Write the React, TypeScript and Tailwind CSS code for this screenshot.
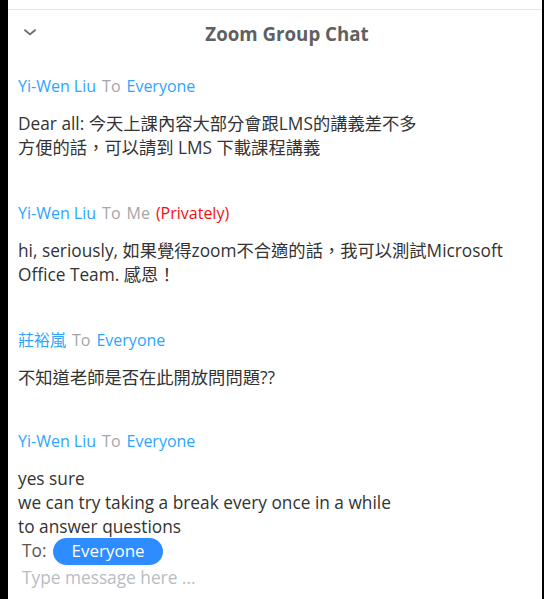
import React from "react";

type Msg = {
  from: string;
  to: string;
  toMe?: boolean;
  gap: string;
  lines: string[];
};

const messages: Msg[] = [
  {
    from: "Yi-Wen Liu",
    to: "Everyone",
    gap: "",
    lines: ["Dear all: 今天上課內容大部分會跟LMS的講義差不多", "方便的話，可以請到 LMS 下載課程講義"],
  },
  {
    from: "Yi-Wen Liu",
    to: "Me",
    toMe: true,
    gap: "mt-[41px]",
    lines: ["hi, seriously, 如果覺得zoom不合適的話，我可以測試Microsoft", "Office Team. 感恩！"],
  },
  {
    from: "莊裕嵐",
    to: "Everyone",
    gap: "mt-[41px]",
    lines: ["不知道老師是否在此開放問問題??"],
  },
  {
    from: "Yi-Wen Liu",
    to: "Everyone",
    gap: "mt-[39px]",
    lines: ["yes sure", "we can try taking a break every once in a while", "to answer questions"],
  },
];

const ChatMessage = ({ msg }: { msg: Msg }) => (
  <div className={msg.gap}>
    <div className="flex items-center gap-[6px] h-[24px] text-[16px] leading-[24px]">
      <span className="text-[#2da5ff]">{msg.from}</span>
      <span className="text-[#a6a6a6]">To</span>
      {msg.toMe ? (
        <>
          <span className="text-[#a6a6a6]">{msg.to}</span>
          <span className="text-[#f01010]">(Privately)</span>
        </>
      ) : (
        <span className="text-[#2da5ff]">{msg.to}</span>
      )}
    </div>
    <div className="mt-[14px] text-[17.3px] leading-[24px] text-[#333333] whitespace-nowrap">
      {msg.lines.map((l, i) => (
        <div key={i} className="h-[24px] flex items-center">
          {l}
        </div>
      ))}
    </div>
  </div>
);

export default function App() {
  return (
    <div
      className="w-[544px] h-[599px] bg-black flex overflow-hidden"
      style={{ fontFamily: '"Open Sans", "Noto Sans CJK TC", sans-serif' }}
    >
      <div className="w-[8px] shrink-0" />
      <div className="flex-1 mr-[2px] bg-white flex flex-col">
        <div className="h-[10px] border-b border-[#e8e8e8] shrink-0" />
        <div className="relative h-[48px] flex items-center justify-center shrink-0">
          <svg
            className="absolute left-[16px] top-[19px]"
            width="12"
            height="7"
            viewBox="0 0 12 7"
            fill="none"
          >
            <path d="M1 1.2 L6 5.4 L11 1.2" stroke="#6b6b6b" strokeWidth="1.8" strokeLinecap="round" strokeLinejoin="round" />
          </svg>
          <span className="ml-[24px] text-[18.7px] font-bold text-[#606060]">Zoom Group Chat</span>
        </div>
        <div className="px-[10px] pt-[16px]">
          {messages.map((m, i) => (
            <ChatMessage key={i} msg={m} />
          ))}
          <div className="flex items-center h-[24px] mt-0 pl-[4px] text-[17.3px]">
            <span className="text-[#5a5550]">To:</span>
            <span className="ml-[7px] h-[27px] px-[18px] flex items-center rounded-full bg-[#2d8cff] text-white text-[17px]">
              Everyone
            </span>
          </div>
          <div className="pl-[4px] mt-[3px] h-[24px] flex items-center text-[17.3px] text-[#b9bcc4]">
            Type message here ...
          </div>
        </div>
      </div>
    </div>
  );
}
